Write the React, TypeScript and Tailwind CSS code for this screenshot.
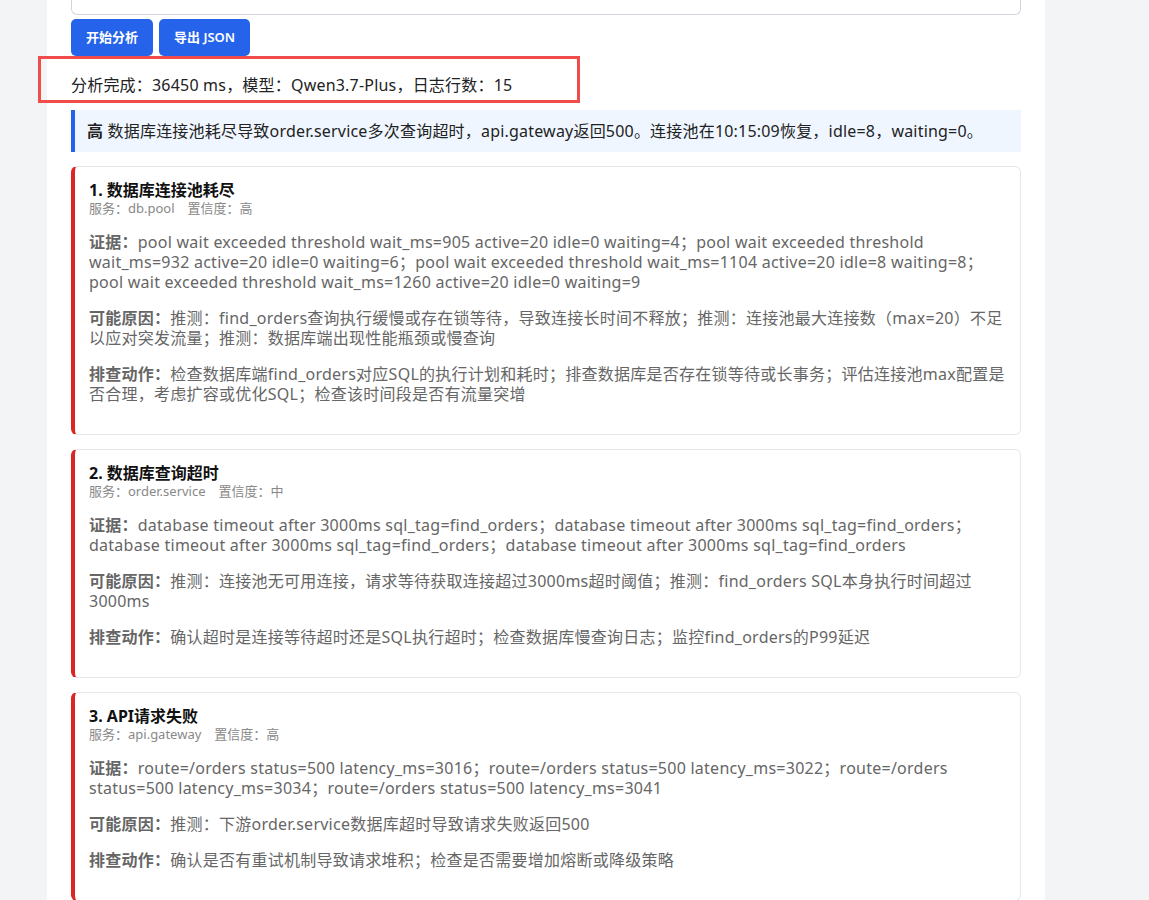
import React from 'react';

const font = { fontFamily: '"Noto Sans", "Noto Sans CJK SC", sans-serif' };

const items = [
  {
    title: '1. 数据库连接池耗尽',
    meta: '服务：db.pool　置信度：高',
    evidence: 'pool wait exceeded threshold wait_ms=905 active=20 idle=0 waiting=4；pool wait exceeded threshold wait_ms=932 active=20 idle=0 waiting=6；pool wait exceeded threshold wait_ms=1104 active=20 idle=8 waiting=8；pool wait exceeded threshold wait_ms=1260 active=20 idle=0 waiting=9',
    cause: '推测：find_orders查询执行缓慢或存在锁等待，导致连接长时间不释放；推测：连接池最大连接数（max=20）不足以应对突发流量；推测：数据库端出现性能瓶颈或慢查询',
    action: '检查数据库端find_orders对应SQL的执行计划和耗时；排查数据库是否存在锁等待或长事务；评估连接池max配置是否合理，考虑扩容或优化SQL；检查该时间段是否有流量突增',
  },
  {
    title: '2. 数据库查询超时',
    meta: '服务：order.service　置信度：中',
    evidence: 'database timeout after 3000ms sql_tag=find_orders；database timeout after 3000ms sql_tag=find_orders；database timeout after 3000ms sql_tag=find_orders；database timeout after 3000ms sql_tag=find_orders',
    cause: '推测：连接池无可用连接，请求等待获取连接超过3000ms超时阈值；推测：find_orders SQL本身执行时间超过3000ms',
    action: '确认超时是连接等待超时还是SQL执行超时；检查数据库慢查询日志；监控find_orders的P99延迟',
  },
  {
    title: '3. API请求失败',
    meta: '服务：api.gateway　置信度：高',
    evidence: 'route=/orders status=500 latency_ms=3016；route=/orders status=500 latency_ms=3022；route=/orders status=500 latency_ms=3034；route=/orders status=500 latency_ms=3041',
    cause: '推测：下游order.service数据库超时导致请求失败返回500',
    action: '确认是否有重试机制导致请求堆积；检查是否需要增加熔断或降级策略',
  },
];

function Row({ label, text }: { label: string; text: string }) {
  return (
    <p className="mt-[16px] text-[16px] leading-[20px] tracking-[0.25px] text-[#666]">
      <b className="font-bold">{label}：</b>{text}
    </p>
  );
}

export default function App() {
  return (
    <div className="min-h-[900px] bg-[#f3f4f6]" style={font}>
      <div className="relative ml-[47px] w-[998px] bg-white px-[24px] pb-6">
        <div className="h-[15px] rounded-b-md border border-t-0 border-[#d1d5db]" />
        <div className="mt-[4px] flex gap-[6px]">
          <button className="h-[37px] rounded-[5px] bg-[#2563eb] px-[15px] text-[13px] font-semibold text-white">开始分析</button>
          <button className="h-[37px] rounded-[5px] bg-[#2563eb] px-[15px] text-[13px] font-semibold text-white">导出 JSON</button>
        </div>
        <div className="relative">
          <div className="pointer-events-none absolute left-[-33px] top-[0px] h-[47px] w-[542px] border-[3px] border-[#f04c4c]" />
          <p className="pt-[19px] text-[16px] leading-[20px] tracking-[0.2px] text-[#222]">分析完成：36450 ms，模型：Qwen3.7-Plus，日志行数：15</p>
        </div>
        <div className="mt-[15px] border-l-4 border-[#2563eb] bg-[#eff6ff] px-[12px] py-[11px] text-[16px] leading-[20px] tracking-[0.2px] text-[#222]">
          <b>高</b> 数据库连接池耗尽导致order.service多次查询超时，api.gateway返回500。连接池在10:15:09恢复，idle=8，waiting=0。
        </div>
        {items.map((it) => (
          <div key={it.title} className="mt-[14px] rounded-[6px] border border-l-4 border-[#e5e7eb] border-l-[#dc2626] px-[14px] pb-[30px] pt-[13px]">
            <div className="text-[16px] font-bold leading-[20px] text-[#111]">{it.title}</div>
            <div className="text-[13px] leading-[16px] text-[#888]">{it.meta}</div>
            <Row label="证据" text={it.evidence} />
            <Row label="可能原因" text={it.cause} />
            <Row label="排查动作" text={it.action} />
          </div>
        ))}
      </div>
    </div>
  );
}
